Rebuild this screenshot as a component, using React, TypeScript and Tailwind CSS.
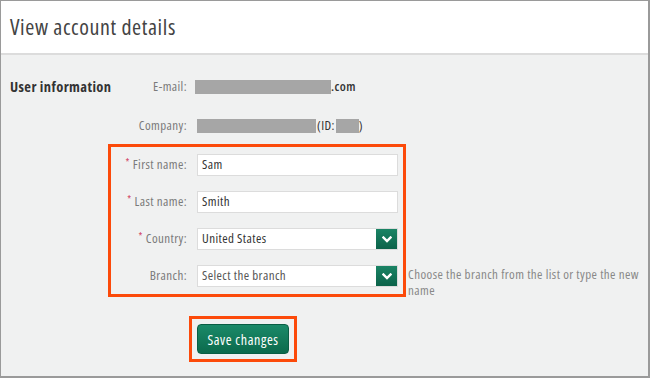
import React from 'react';

const font = { fontFamily: '"Open Sans", "Liberation Sans", sans-serif', fontStretch: '75%' };

function Chevron() {
  return (
    <svg width="10" height="7" viewBox="0 0 10 7" fill="none">
      <path d="M1.5 1.5 L5 5 L8.5 1.5" stroke="white" strokeWidth="2.4" strokeLinecap="square" />
    </svg>
  );
}

function Label({ label, required, width }: { label: string; required?: boolean; width: string }) {
  return (
    <div className={width + ' text-right text-[13px] text-[#7a7a7a] whitespace-nowrap'}>
      {required && <span className="text-[#d03a5c] text-[10px] align-top mr-[3px]">*</span>}
      {label}
    </div>
  );
}

function Field({ label, required, value }: { label: string; required?: boolean; value: string }) {
  return (
    <div className="flex items-center h-[22px]">
      <Label label={label} required={required} width="w-[76px]" />
      <div className="ml-[10px] w-[201px] h-[22px] bg-white border border-[#dcdcdc] flex items-center px-[4px] text-[13px] text-[#333]">
        {value}
      </div>
    </div>
  );
}

function SelectField({ label, required, value, placeholder }: { label: string; required?: boolean; value: string; placeholder?: boolean }) {
  return (
    <div className="flex items-center h-[22px]">
      <Label label={label} required={required} width="w-[76px]" />
      <div className="ml-[10px] w-[201px] h-[22px] bg-white border border-[#dcdcdc] flex items-center">
        <span className={'flex-1 px-[4px] text-[13px] ' + (placeholder ? 'text-[#555]' : 'text-[#333]')}>{value}</span>
        <span className="w-[21px] h-[20px] flex items-center justify-center bg-gradient-to-b from-[#1a8465] to-[#0c634a]">
          <Chevron />
        </span>
      </div>
    </div>
  );
}

export default function App() {
  return (
    <div style={font} className="w-[650px] h-[378px] flex flex-col border-l border-t border-r-2 border-b-2 border-[#9a9a9a] bg-[#f0f1f1] tracking-[0.4px]">
      <header className="h-[54px] shrink-0 bg-white border-b-2 border-[#dcdcdc] flex items-center px-[9px]">
        <h1 className="text-[22px] text-[#444] leading-none -mt-[2px] tracking-[0.6px]">View account details</h1>
      </header>

      <div className="flex pt-[22px] pl-[9px]">
        <div className="w-[98px] shrink-0 h-[20px] flex items-center">
          <span className="text-[14.5px] font-bold text-[#333] whitespace-nowrap">User information</span>
        </div>

        <div className="flex-1 flex flex-col">
          <div className="flex items-center h-[20px]">
            <Label label="E-mail:" width="w-[79px]" />
            <div className="ml-[8px] flex items-center text-[13px] text-[#333] font-semibold">
              <span className="inline-block w-[136px] h-[14px] bg-[#a6a6a6]" />
              <span>.com</span>
            </div>
          </div>

          <div className="flex items-center h-[20px] mt-[19px]">
            <Label label="Company:" width="w-[79px]" />
            <div className="ml-[10px] flex items-center text-[13px] text-[#333]">
              <span className="inline-block w-[119px] h-[14px] bg-[#a6a6a6]" />
              <span className="ml-[1px]">(ID:</span>
              <span className="inline-block w-[23px] h-[14px] bg-[#a6a6a6] ml-[1px]" />
              <span>)</span>
            </div>
          </div>

          <div className="flex mt-[8px]">
            <div className="border-[3px] border-[#fc4a0a] pt-[7px] pb-[7px] pr-[5px] flex flex-col gap-[15px]">
              <Field label="First name:" required value="Sam" />
              <Field label="Last name:" required value="Smith" />
              <SelectField label="Country:" required value="United States" />
              <SelectField label="Branch:" value="Select the branch" placeholder />
            </div>
            <p className="self-end mb-[-1px] ml-[2px] pr-[6px] text-[13px] leading-[16px] text-[#888]">
              Choose the branch from the list or type the new name
            </p>
          </div>

          <div className="mt-[19px] ml-[81px] self-start border-[3px] border-[#fc4a0a] p-[5px]">
            <button className="w-[92px] h-[30px] rounded-[4px] bg-gradient-to-b from-[#1b8a69] to-[#0b6a4c] text-white text-[14px] tracking-[0.6px] border border-[#0a5e44]">
              Save changes
            </button>
          </div>
        </div>
      </div>
    </div>
  );
}
